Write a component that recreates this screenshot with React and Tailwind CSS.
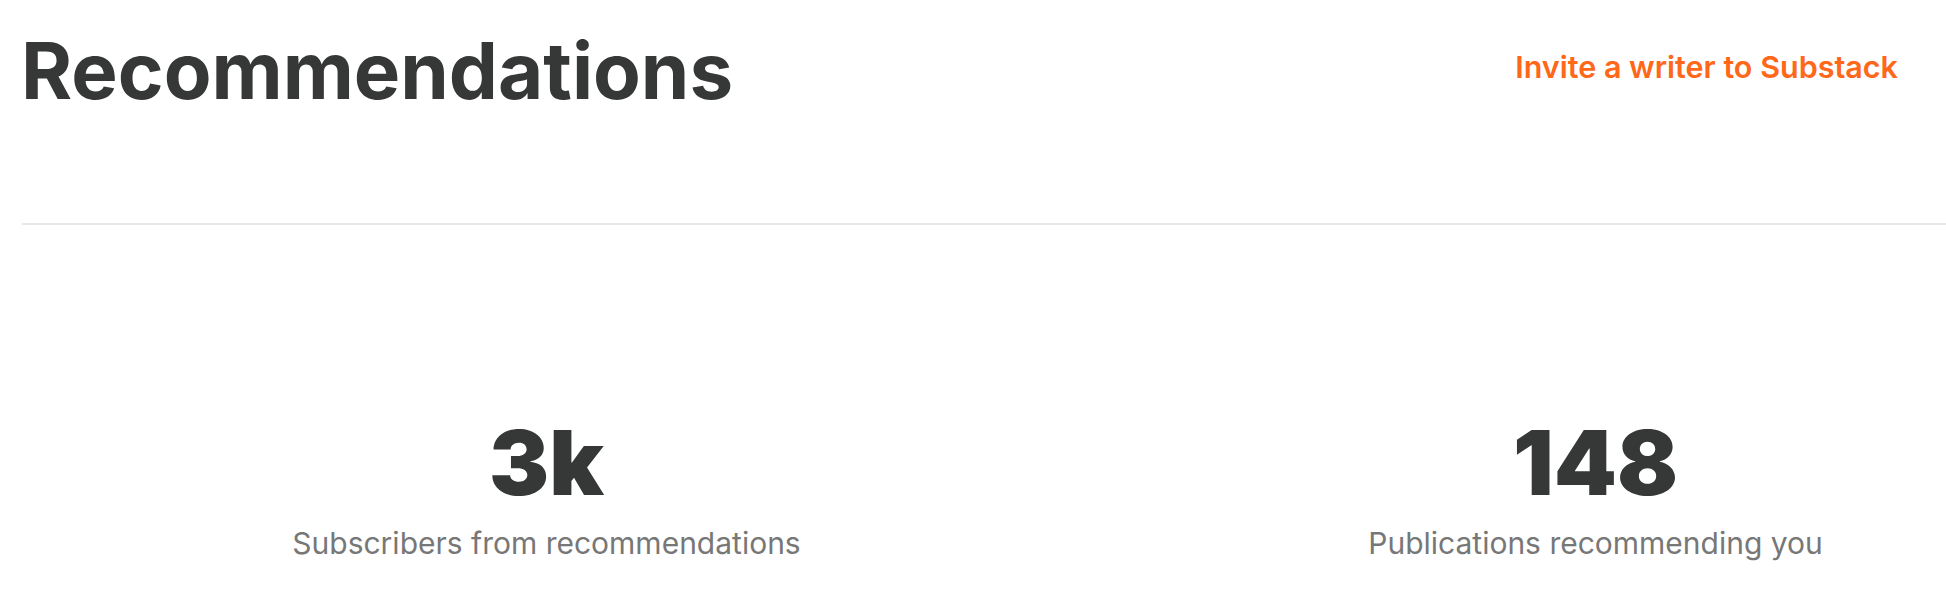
export default function App() {
  return (
    <div className="w-[1946px] h-[612px] overflow-hidden bg-white" style={{ fontFamily: 'Inter, "Noto Sans", sans-serif' }}>
      <div className="flex items-start justify-between pl-[21px] pr-[48px]">
        <h1 className="mt-[32px] text-[78px] leading-none font-bold text-[#363737]">Recommendations</h1>
        <a className="mt-[52px] text-[30.5px] leading-none font-semibold text-[#ff6719]">Invite a writer to Substack</a>
      </div>
      <div className="ml-[22px] mt-[113px] h-[2px] w-[2100px] bg-[#e6e6e6]"></div>
      <div className="ml-[22px] mt-[193px] flex w-[2098px]">
        <div className="flex w-[1049px] flex-col items-center">
          <div className="text-[90px] leading-none font-black text-[#363737]">3k</div>
          <div className="mt-[20px] text-[30px] leading-none text-[#777777]">Subscribers from recommendations</div>
        </div>
        <div className="flex w-[1049px] flex-col items-center">
          <div className="text-[90px] leading-none font-black text-[#363737]">148</div>
          <div className="mt-[20px] text-[30px] leading-none text-[#777777]">Publications recommending you</div>
        </div>
      </div>
    </div>
  );
}
